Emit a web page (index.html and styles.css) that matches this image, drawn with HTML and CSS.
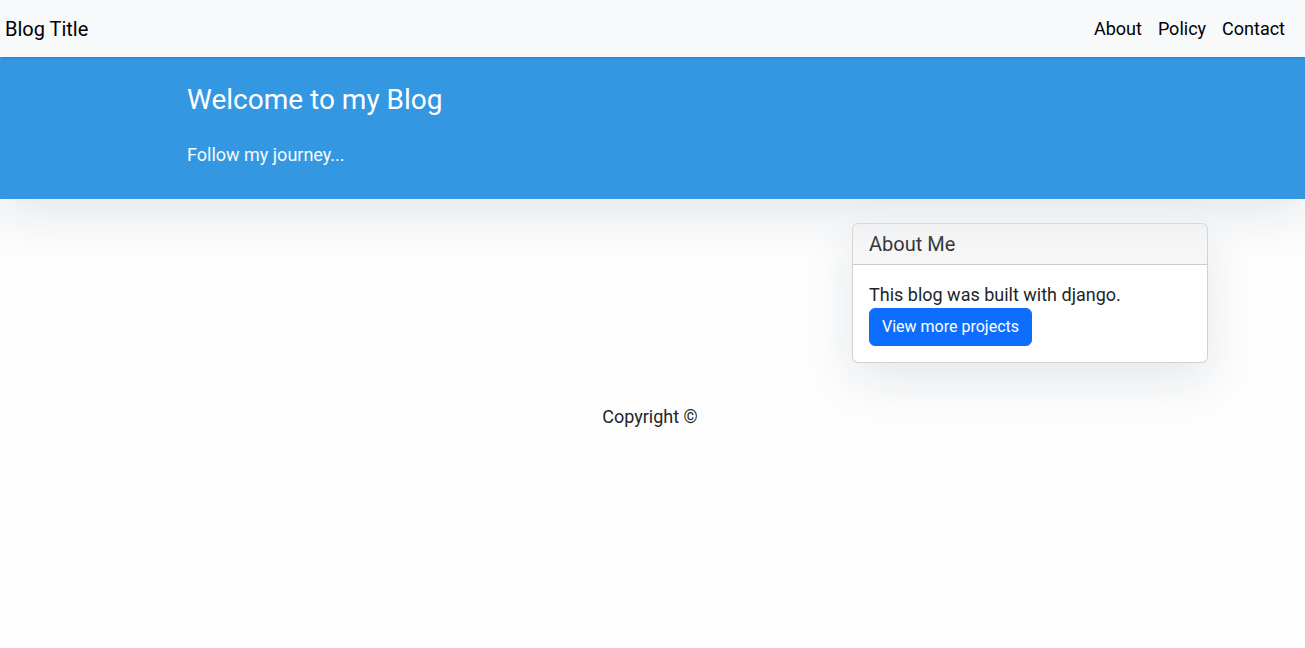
FILE: index.html
```html
<!DOCTYPE html>
<html lang="en">
<head>
<meta charset="utf-8">
<title>Blog</title>
<link rel="stylesheet" href="styles.css">
</head>
<body>
<nav class="navbar">
  <a class="brand" href="#">Blog Title</a>
  <ul class="nav-links">
    <li><a class="nav-link" href="#">About</a></li>
    <li><a class="nav-link" href="#">Policy</a></li>
    <li><a class="nav-link" href="#">Contact</a></li>
  </ul>
</nav>
<header class="masthead">
  <div class="wrap">
    <div class="container">
      <div class="heading-col">
        <h3 class="site-heading">Welcome to my Blog</h3>
        <p class="tagline">Follow my journey...</p>
      </div>
    </div>
  </div>
</header>
<main class="wrap">
  <div class="container">
    <div class="row">
      <div class="posts"></div>
      <aside class="sidebar">
        <div class="card">
          <h5 class="card-header">About Me</h5>
          <div class="card-body">
            <p class="card-text">This blog was built with django.</p>
            <a href="#" class="btn">View more projects</a>
          </div>
        </div>
      </aside>
    </div>
  </div>
</main>
<footer class="footer wrap">
  <p class="copyright">Copyright &copy;</p>
</footer>
</body>
</html>
```
FILE: styles.css
```css
* { box-sizing: border-box; }
html, body { margin: 0; padding: 0; }
body {
  font-family: Roboto, "Liberation Sans", Arial, sans-serif;
  font-size: 18px;
  line-height: 1.5;
  color: #212529;
  background-color: #fdfdfd;
}
a { text-decoration: none; }

.navbar {
  position: relative;
  z-index: 2;
  display: flex;
  align-items: center;
  justify-content: space-between;
  height: 57px;
  padding: 0 12px 0 5px;
  background-color: #f8f9fa;
  box-shadow: 0 4px 2px -2px rgba(0, 0, 0, 0.1);
}
.brand {
  font-size: 20px;
  line-height: 30px;
  padding: 5px 0;
  color: #000;
}
.nav-links {
  display: flex;
  list-style: none;
  margin: 0;
  padding: 0;
}
.nav-link {
  display: block;
  padding: 8px 8px;
  color: #000;
  font-size: 18px;
  line-height: 27px;
}

.wrap { padding-right: 5px; }
.container {
  width: 1140px;
  margin: 0 auto;
  padding: 0 12px;
}

.masthead {
  position: relative;
  z-index: 1;
  background: #3398e1;
  padding-top: 10px;
  padding-bottom: 15px;
  box-shadow: 0 16px 48px #e3e7eb;
}
.heading-col {
  width: 950px;
  margin: 0 auto;
  padding: 0 12px;
}
.site-heading {
  margin: 16px 0 24px;
  font-size: 28px;
  font-weight: 400;
  line-height: 1.2;
  color: #fff;
}
.tagline {
  margin: 0 0 16px;
  color: #f8f9fa;
}

.row {
  display: flex;
  margin: 0 -12px;
}
.posts {
  width: 760px;
  padding: 0 12px;
  margin-top: 16px;
}
.sidebar {
  width: 380px;
  padding: 0 12px;
}
.card {
  margin: 24px 0;
  background: #fff;
  border: 1px solid rgba(0, 0, 0, 0.175);
  border-radius: 6px;
  box-shadow: 0 16px 48px #e3e7eb;
  overflow: hidden;
}
.card-header {
  margin: 0;
  padding: 8px 16px;
  font-size: 20px;
  font-weight: 400;
  line-height: 1.2;
  background-color: rgba(0, 0, 0, 0.03);
  border-bottom: 1px solid rgba(0, 0, 0, 0.175);
  color: #212529;
}
.card-body {
  padding: 16px;
}
.card-text {
  margin: 0;
}
.btn {
  display: inline-block;
  padding: 6px 12px;
  font-size: 16px;
  line-height: 24px;
  color: #fff;
  background-color: #0d6efd;
  border: 1px solid #0d6efd;
  border-radius: 6px;
}

.footer {
  padding-top: 16px;
  padding-bottom: 16px;
}
.copyright {
  margin: 0;
  text-align: center;
  color: #212529;
}
```
